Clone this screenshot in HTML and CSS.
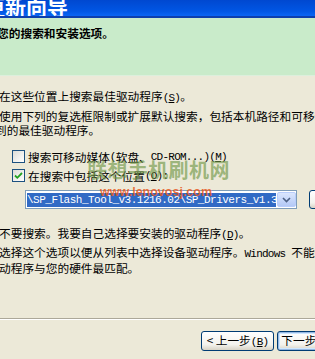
FILE: index.html
```html
<!DOCTYPE html>
<html lang="zh-CN">
<head>
    <meta charset="UTF-8">
    <meta name="viewport" content="width=device-width, initial-scale=1.0">
    <title>硬件更新向导</title>
    <link rel="stylesheet" href="styles.css">
</head>
<body>
    <div class="wizard">
        <div class="titlebar"><span class="title">硬件更新向导</span></div>
        <div class="header">
            <p class="subtitle">请选择您的搜索和安装选项。</p>
        </div>

        <div class="body">
            <p class="option">在这些位置上搜索最佳驱动程序<span class="en">(<u>S</u>)</span>。</p>
            <p class="desc">使用下列的复选框限制或扩展默认搜索，包括本机路径和可移动媒体。会安装找<br><span class="cont">到的最佳驱动程序。</span></p>

            <div class="checks">
                <label class="check"><span class="box"></span>搜索可移动媒体<span class="en"> (</span>软盘、<span class="en">CD-ROM...)(<u>M</u>)</span></label>
                <label class="check"><span class="box checked"><svg viewBox="0 0 11 11" width="11" height="11"><path d="M2 5.5 L4.3 7.8 L9 3" fill="none" stroke="#21a121" stroke-width="1.8"/></svg></span>在搜索中包括这个位置<span class="en">(<u>O</u>):</span></label>
                <div class="path-row">
                    <div class="combo">
                        <span class="combo-text en">\SP_Flash_Tool_v3.1216.02\SP_Drivers_v1.3</span>
                        <span class="combo-btn"><svg viewBox="0 0 9 6" width="9" height="6"><path d="M1 1 L4.5 4.5 L8 1" fill="none" stroke="#4d6185" stroke-width="1.6"/></svg></span>
                    </div>
                    <button class="btn browse">浏览(R)</button>
                </div>
            </div>

            <p class="option second">不要搜索。我要自己选择要安装的驱动程序<span class="en">(<u>D</u>)</span>。</p>
            <p class="desc tight">选择这个选项以便从列表中选择设备驱动程序。<span class="en">Windows </span>不能保证您选择的驱<br>动程序与您的硬件最匹配。</p>

            <div class="watermark">
                <span class="wm-cn">联想手机刷机网</span>
                <span class="wm-url">www.lenovosj.com</span>
            </div>
        </div>

        <div class="footer">
            <button class="btn">&lt; 上一步<span class="en">(<u>B</u>)</span></button>
            <button class="btn default">下一步<span class="en">(<u>N</u>) &gt;</span></button>
            <button class="btn cancel">取消</button>
        </div>
    </div>
</body>
</html>
```

FILE: styles.css
```css
body { margin: 0; background: #ece9d8; font-family: "Noto Sans CJK SC", sans-serif; font-size: 11.7px; color: #000; }
p { margin: 0; }
.wizard { width: 315px; height: 359px; overflow: hidden; white-space: nowrap; }
.en { font-family: "Liberation Mono", monospace; font-size: 11px; letter-spacing: -0.75px; }

.titlebar { height: 16px; overflow: hidden; background: linear-gradient(#0048d0, #0056e4 70%, #0a66f4); border-bottom: 2px solid #0c3fae; }
.title { display: block; margin: -4px 0 0 -58px; font-size: 21px; line-height: 21px; font-weight: bold; color: #fff; }

.header { height: 57px; background: #c9ebca; border-bottom: 1px solid #dcefdc; overflow: hidden; }
.subtitle { margin: 8px 0 0 -38px; line-height: 14px; font-weight: bold; }

.body { position: relative; height: 242px; padding-top: 13px; box-sizing: border-box; overflow: hidden; }
.option { line-height: 14px; margin-left: -1px; }
.desc { line-height: 14px; margin: 4px 0 0 -1px; }
.desc .cont { margin-left: -4px; }
.option.second { margin-top: 17px; }
.desc.tight { margin-top: 3px; }

.checks { margin: 10px 0 0 12px; }
.check { display: flex; align-items: center; height: 19px; }
.box { width: 11px; height: 11px; margin-right: 3px; border: 1px solid #1c5180; background: linear-gradient(135deg, #dcdcd7, #fff); display: flex; align-items: center; justify-content: center; }
.path-row { display: flex; margin: 5px 0 0 13px; }
.combo { width: 270px; height: 17px; border: 1px solid #7f9db9; background: #fff; display: flex; align-items: center; padding-left: 1px; }
.combo-text { width: 249px; height: 14px; line-height: 14px; overflow: hidden; background: #316ac5; color: #fff; letter-spacing: -0.5px; }
.combo-btn { width: 19px; height: 15px; margin-left: 1px; box-sizing: border-box; border: 1px solid #b9cdfb; border-radius: 2px; background: linear-gradient(#dbe6fd, #b4c9f6); display: flex; align-items: center; justify-content: center; }

.btn { font-family: inherit; font-size: 11.7px; height: 20px; padding: 0; border: 1px solid #003c74; border-radius: 3px; background: linear-gradient(#fff, #f3f2ed 70%, #d8d3c5); color: #000; flex-shrink: 0; line-height: 16px; }
.browse { width: 73px; height: 19px; margin-left: 12px; }

.watermark { position: absolute; left: 87px; top: 83px; display: flex; flex-direction: column; pointer-events: none; }
.wm-cn { font-size: 20px; line-height: 22px; font-weight: bold; color: rgba(110, 150, 70, 0.65); letter-spacing: 0.4px; }
.wm-url { margin: 4px 0 0 13px; font-family: "Liberation Sans", sans-serif; font-size: 12.5px; line-height: 14px; font-weight: bold; color: rgba(232, 90, 30, 0.85); }

.footer { border-top: 1px solid #aca899; box-shadow: inset 0 1px #fff; padding: 12px 0 0 201px; display: flex; gap: 3px; }
.footer .btn { width: 73px; }
.btn.default { border-color: #003c74; box-shadow: inset 0 0 0 1px #97b8e2, inset 0 0 0 2px #cee7ff; }
.footer .cancel { margin-left: 6px; }
```
